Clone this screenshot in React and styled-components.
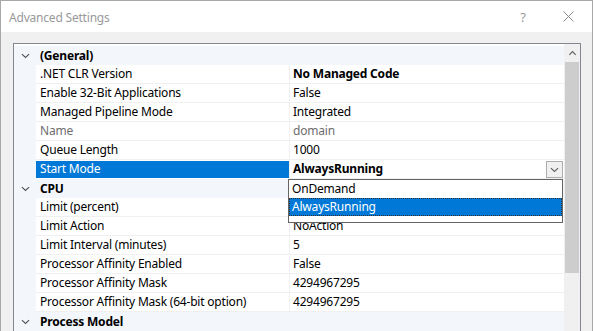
import React from 'react'
import styled, { createGlobalStyle } from 'styled-components'

const GlobalStyle = createGlobalStyle`
  html, body {
    margin: 0;
    padding: 0;
    background: #ffffff;
  }
  body {
    font-family: "Noto Sans", "Open Sans", sans-serif;
    font-size: 12px;
    color: #000;
  }
`

const Window = styled.div`
  width: 593px;
  height: 331px;
  box-sizing: border-box;
  border: 1px solid #a8a8a8;
  border-bottom: none;
  background: #f0f0f0;
  display: flex;
  flex-direction: column;
  overflow: hidden;
`

const TitleBar = styled.div`
  height: 31px;
  background: #ffffff;
  display: flex;
  align-items: center;
  padding-left: 8px;
  flex-shrink: 0;
`

const Title = styled.div`
  flex: 1;
  color: #999999;
  font-size: 12px;
  letter-spacing: -0.2px;
  padding-top: 1px;
`

const TitleButton = styled.div`
  width: ${p => p.$width || 40}px;
  height: 31px;
  display: flex;
  align-items: center;
  justify-content: center;
  color: #9a9a9a;
  font-size: 13px;
`

const Body = styled.div`
  flex: 1;
  padding: 11px 0 0 12px;
  display: flex;
  min-height: 0;
`

const Grid = styled.div`
  width: 566px;
  border: 1px solid #828790;
  border-bottom: none;
  background: #ffffff;
  display: flex;
  position: relative;
`

const Rows = styled.div`
  width: 550px;
  padding-top: 2px;
  display: flex;
  flex-direction: column;
  background: #ffffff;
`

const Row = styled.div`
  height: 19px;
  display: grid;
  grid-template-columns: 22px 254px 274px;
  flex-shrink: 0;
  background: ${p => (p.$category ? '#f3f6fb' : '#ffffff')};
`

const Gutter = styled.div`
  background: #f3f6fb;
  display: flex;
  align-items: center;
  justify-content: center;
`

const NameCell = styled.div`
  box-sizing: border-box;
  border-right: 1px solid #f0f0f0;
  border-bottom: 1px solid #f0f0f0;
  padding-left: 4px;
  line-height: 18px;
  white-space: nowrap;
  letter-spacing: -0.2px;
  color: ${p => (p.$selected ? '#ffffff' : p.$readonly ? '#6d6d6d' : '#000')};
  background: ${p => (p.$selected ? '#0078d7' : 'transparent')};
  ${p => p.$selected && 'border-top: 1px solid #ffffff; border-bottom: 1px solid #ffffff; line-height: 16px;'}
`

const ValueCell = styled.div`
  box-sizing: border-box;
  border-bottom: 1px solid #f0f0f0;
  padding-left: 3px;
  line-height: 18px;
  white-space: nowrap;
  letter-spacing: -0.2px;
  display: flex;
  align-items: center;
  justify-content: space-between;
  font-weight: ${p => (p.$bold ? 700 : 400)};
  color: ${p => (p.$readonly ? '#6d6d6d' : '#000')};
`

const CategoryName = styled.div`
  grid-column: 2 / 4;
  padding-left: 4px;
  line-height: 19px;
  font-weight: 700;
  letter-spacing: -0.2px;
`

const ComboButton = styled.div`
  width: 15px;
  height: 15px;
  border: 1px solid #adadad;
  background: #f0f0f0;
  margin-right: 1px;
  display: flex;
  align-items: center;
  justify-content: center;
`

const Scrollbar = styled.div`
  width: 16px;
  background: #f0f0f0;
  display: flex;
  flex-direction: column;
`

const ScrollArrow = styled.div`
  height: 18px;
  display: flex;
  align-items: center;
  justify-content: center;
`

const Thumb = styled.div`
  margin: 0 1px;
  height: 211px;
  background: #cdcdcd;
`

const DropList = styled.div`
  position: absolute;
  left: 274px;
  top: 135px;
  width: 275px;
  box-sizing: border-box;
  border: 1px solid #646464;
  background: #ffffff;
  padding-bottom: 6px;
`

const DropItem = styled.div`
  height: 18px;
  box-sizing: border-box;
  padding-left: 2px;
  line-height: 16px;
  letter-spacing: -0.2px;
  border: 1px ${p => (p.$active ? 'dotted #333' : 'solid transparent')};
  background: ${p => (p.$active ? '#0078d7' : '#ffffff')};
  color: ${p => (p.$active ? '#ffffff' : '#000')};
`

const Chevron = ({ up, size = 9, color = '#555' }) => (
  <svg width={size} height={size} viewBox="0 0 10 10">
    <path
      d={up ? 'M1.5 6.5 L5 3 L8.5 6.5' : 'M1 3.5 L5 7.2 L9 3.5'}
      fill="none"
      stroke={color}
      strokeWidth="1.3"
    />
  </svg>
)

const rows = [
  { category: '(General)' },
  { name: '.NET CLR Version', value: 'No Managed Code', bold: true },
  { name: 'Enable 32-Bit Applications', value: 'False' },
  { name: 'Managed Pipeline Mode', value: 'Integrated' },
  { name: 'Name', value: 'domain', readonly: true },
  { name: 'Queue Length', value: '1000' },
  { name: 'Start Mode', value: 'AlwaysRunning', bold: true, selected: true },
  { category: 'CPU' },
  { name: 'Limit (percent)', value: '' },
  { name: 'Limit Action', value: 'NoAction' },
  { name: 'Limit Interval (minutes)', value: '5' },
  { name: 'Processor Affinity Enabled', value: 'False' },
  { name: 'Processor Affinity Mask', value: '4294967295' },
  { name: 'Processor Affinity Mask (64-bit option)', value: '4294967295' },
  { category: 'Process Model' },
]

export default function App() {
  return (
    <>
      <GlobalStyle />
      <Window>
        <TitleBar>
          <Title>Advanced Settings</Title>
          <TitleButton $width={42}>?</TitleButton>
          <TitleButton $width={48}>
            <svg width="11" height="11" viewBox="0 0 11 11">
              <path d="M0.5 0.5 L10.5 10.5 M10.5 0.5 L0.5 10.5" stroke="#8a8a8a" strokeWidth="1" />
            </svg>
          </TitleButton>
        </TitleBar>
        <Body>
          <Grid>
            <Rows>
              {rows.map((r, i) =>
                r.category ? (
                  <Row key={i} $category>
                    <Gutter>
                      <Chevron />
                    </Gutter>
                    <CategoryName>{r.category}</CategoryName>
                  </Row>
                ) : (
                  <Row key={i}>
                    <Gutter />
                    <NameCell $selected={r.selected} $readonly={r.readonly}>
                      {r.name}
                    </NameCell>
                    <ValueCell $bold={r.bold} $readonly={r.readonly}>
                      {r.value}
                      {r.selected && (
                        <ComboButton>
                          <Chevron size={9} color="#606060" />
                        </ComboButton>
                      )}
                    </ValueCell>
                  </Row>
                )
              )}
            </Rows>
            <Scrollbar>
              <ScrollArrow>
                <Chevron up color="#606060" />
              </ScrollArrow>
              <Thumb />
            </Scrollbar>
            <DropList>
              <DropItem>OnDemand</DropItem>
              <DropItem $active>AlwaysRunning</DropItem>
            </DropList>
          </Grid>
        </Body>
      </Window>
    </>
  )
}
